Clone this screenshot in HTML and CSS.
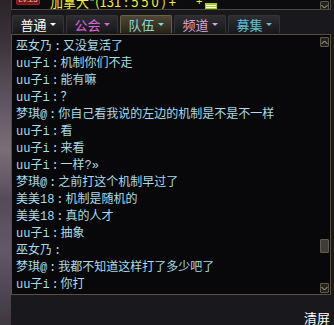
FILE: index.html
```html
<!DOCTYPE html>
<html>
<head>
<meta charset="utf-8">
<link rel="stylesheet" href="styles.css">
</head>
<body>
<div class="screen">
  <div class="side"></div>
  <div class="main">
    <div class="topbar">
      <span class="lv">LV.25</span>
      <span class="loc">加拿大*(131<span class="sep-s">:</span>5 5 0 ) +</span>
      <span class="plus">+</span>
      <span class="mail"><i></i><i></i></span>
      <span class="spacer"></span>
      <span class="sbtn"><svg width="7" height="5" viewBox="0 0 7 5"><path d="M0.5 1 L3.5 4 L6.5 1" fill="none" stroke="#b8b09a" stroke-width="1"/></svg></span>
    </div>
    <div class="tabs">
      <div class="tab t-white">普通<b class="arr"></b></div>
      <div class="tab t-magenta">公会<b class="arr"></b></div>
      <div class="tab active t-cyan">队伍<b class="arr"></b></div>
      <div class="tab t-pink">频道<b class="arr"></b></div>
      <div class="tab t-blue">募集<b class="arr"></b></div>
    </div>
    <div class="chat">
      <div class="lines">
        <div class="ln">巫女乃<span class="sep">:</span>又没复活了</div>
        <div class="ln">uu子i<span class="sep">:</span>机制你们不走</div>
        <div class="ln">uu子i<span class="sep">:</span>能有嘛</div>
        <div class="ln">uu子i<span class="sep">:</span>？</div>
        <div class="ln">梦琪@<span class="sep">:</span>你自己看我说的左边的机制是不是不一样</div>
        <div class="ln">uu子i<span class="sep">:</span>看</div>
        <div class="ln">uu子i<span class="sep">:</span>来看</div>
        <div class="ln">uu子i<span class="sep">:</span>一样?»</div>
        <div class="ln">梦琪@<span class="sep">:</span>之前打这个机制早过了</div>
        <div class="ln">美美18<span class="sep">:</span>机制是随机的</div>
        <div class="ln">美美18<span class="sep">:</span>真的人才</div>
        <div class="ln">uu子i<span class="sep">:</span>抽象</div>
        <div class="ln">巫女乃<span class="sep">:</span></div>
        <div class="ln">梦琪@<span class="sep">:</span>我都不知道这样打了多少吧了</div>
        <div class="ln">uu子i<span class="sep">:</span>你打</div>
      </div>
      <div class="scroll">
        <span class="sbtn up"><svg width="7" height="5" viewBox="0 0 7 5"><path d="M0.5 4 L3.5 1 L6.5 4" fill="none" stroke="#b8b09a" stroke-width="1"/></svg></span>
        <div class="track"><div class="thumb"></div></div>
        <span class="sbtn"><svg width="7" height="5" viewBox="0 0 7 5"><path d="M0.5 1 L3.5 4 L6.5 1" fill="none" stroke="#b8b09a" stroke-width="1"/></svg></span>
      </div>
    </div>
    <div class="footer"><span class="clear">清屏</span></div>
  </div>
</div>
</body>
</html>
```
FILE: styles.css
```css
html, body {
  margin: 0;
  padding: 0;
  background: #19181d;
}
.screen {
  width: 334px;
  height: 325px;
  overflow: hidden;
  display: flex;
  background: #19181d;
  font-family: "Liberation Mono", "Noto Sans CJK SC", monospace;
}
.side {
  width: 11px;
  flex: none;
  background: linear-gradient(180deg, #2a2427 0px, #3a3238 40px, #5e5460 100px, #7a6e78 150px, #564c58 200px, #625868 250px, #3e3840 325px);
}
.main {
  width: 323px;
  display: flex;
  flex-direction: column;
}
.topbar {
  height: 12px;
  border-left: 1px solid #4e493e;
  border-right: 1px solid #4e493e;
  border-bottom: 1px solid #4e493e;
  margin-right: 3px;
  display: flex;
  align-items: flex-end;
  overflow: hidden;
  background: #0c0b0e;
}
.lv {
  align-self: flex-start;
  margin-top: -6px;
  margin-left: 4px;
  width: 24px;
  height: 11px;
  box-sizing: border-box;
  background: #7a1414;
  border: 1px solid #a02020;
  border-radius: 2px;
  color: #d8c8c0;
  font-size: 8px;
  line-height: 9px;
  text-align: center;
  font-family: "Liberation Sans", sans-serif;
}
.loc {
  margin-left: 10px;
  color: #f2ee3a;
  font-size: 13px;
  line-height: 13px;
  margin-bottom: 1px;
  white-space: nowrap;
  font-family: "Noto Sans CJK SC", sans-serif;
}
.sep-s {
  display: inline-block;
  width: 10px;
  text-align: center;
}
.plus {
  margin-left: 20px;
  color: #f2ee3a;
  font-size: 11px;
  line-height: 12px;
  margin-bottom: 2px;
  font-family: "Liberation Sans", sans-serif;
}
.mail {
  align-self: flex-start;
  margin-top: 3px;
  margin-left: 3px;
  width: 12px;
  height: 7px;
  background: #9ed21a;
  display: flex;
  flex-direction: column;
  justify-content: center;
  gap: 1px;
  padding: 0 1px;
  box-sizing: border-box;
}
.mail i {
  display: block;
  height: 1px;
  background: #ffffff;
}
.spacer { flex: 1; }
.sbtn {
  width: 9px;
  height: 10px;
  box-sizing: border-box;
  border: 1px solid #5e5a4e;
  background: #24221e;
  border-radius: 1px;
  display: flex;
  align-items: center;
  justify-content: center;
  flex: none;
}
.topbar .sbtn {
  align-self: flex-start;
  margin-top: 1px;
  margin-right: 1px;
}
.tabs {
  margin-top: 5px;
  height: 19px;
  display: flex;
  gap: 2px;
  padding-left: 1px;
}
.tab {
  width: 52px;
  box-sizing: border-box;
  border: 1px solid #343438;
  border-bottom: none;
  border-radius: 2px 2px 0 0;
  background: linear-gradient(180deg, #2e2e32, #18181b);
  display: flex;
  align-items: center;
  justify-content: center;
  font-family: "Noto Sans CJK SC", sans-serif;
  font-size: 13px;
  line-height: 17px;
}
.tab.active {
  border-color: #6a6048;
  background: linear-gradient(180deg, #4e4734, #27241a);
}
.arr {
  display: inline-block;
  margin-left: 3px;
  width: 0;
  height: 0;
  border-left: 3px solid transparent;
  border-right: 3px solid transparent;
  border-top: 3px solid currentColor;
}
.t-white { color: #ffffff; }
.t-magenta { color: #da66da; }
.t-cyan { color: #8ed4d8; }
.t-pink { color: #dca4d2; }
.t-blue { color: #5ec2dc; }
.chat {
  margin-top: 1px;
  width: 320px;
  height: 263px;
  box-sizing: border-box;
  border: 1px solid #57503f;
  background: #08080b;
  display: flex;
}
.lines {
  flex: 1;
  padding: 4px 0 0 4px;
  color: #a8dce8;
  font-size: 12px;
  line-height: 17px;
  overflow: hidden;
}
.ln {
  white-space: nowrap;
  height: 17px;
}
.sep {
  display: inline-block;
  width: 11px;
  text-align: center;
}
.scroll {
  width: 9px;
  margin-right: 1px;
  display: flex;
  flex-direction: column;
  padding: 2px 0 1px;
}
.track {
  flex: 1;
  display: flex;
  flex-direction: column;
  justify-content: flex-end;
  padding-bottom: 30px;
}
.thumb {
  height: 14px;
  box-sizing: border-box;
  border: 1px solid #5e5a4e;
  background: #3e3c36;
  border-radius: 1px;
}
.footer {
  flex: 1;
  display: flex;
  justify-content: flex-end;
  align-items: flex-start;
  padding-right: 4px;
}
.clear {
  margin-top: 16px;
  color: #ffffff;
  font-family: "Noto Sans CJK SC", sans-serif;
  font-size: 13px;
  line-height: 14px;
}
```
